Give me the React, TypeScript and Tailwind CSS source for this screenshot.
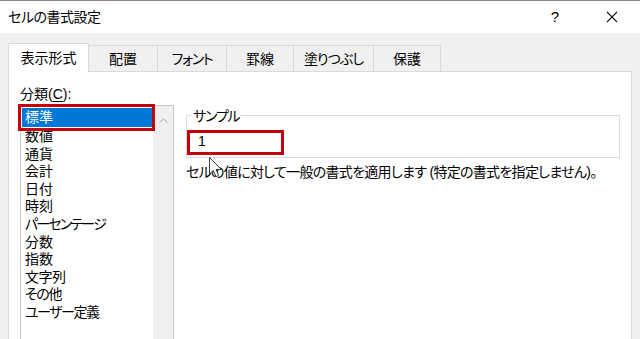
import React from "react";

const items: { t: string; c?: string }[] = [
  { t: "数値" },
  { t: "通貨" },
  { t: "会計" },
  { t: "日付" },
  { t: "時刻" },
  { t: "パーセンテージ", c: "tracking-[-1.8px]" },
  { t: "分数" },
  { t: "指数" },
  { t: "文字列", c: "tracking-[-0.5px]" },
  { t: "その他", c: "tracking-[-1.3px]" },
  { t: "ユーザー定義", c: "tracking-[-1.5px]" },
];

const tabs = [
  { label: "配置", w: "w-[69px]", c: "" },
  { label: "フォント", w: "w-[69px]", c: "tracking-[-1.2px]" },
  { label: "罫線", w: "w-[67px]", c: "" },
  { label: "塗りつぶし", w: "w-[80px]", c: "tracking-[-1px]" },
  { label: "保護", w: "w-[67px]", c: "" },
];

export default function App() {
  return (
    <div
      className="w-[640px] h-[339px] overflow-hidden bg-[#f0f0f0] relative flex flex-col text-black text-[14px] [font-feature-settings:'palt']"
      style={{ fontFamily: '"Liberation Sans", "Noto Sans CJK JP", sans-serif' }}
    >
      {/* title bar */}
      <div className="h-[33px] shrink-0 bg-white border-t border-[#8a8a8a] flex items-center pl-[8px]">
        <span className="leading-[18px] tracking-[-0.5px]">セルの書式設定</span>
        <span className="ml-auto mr-[47px] leading-[18px] text-[15px]">?</span>
        <svg width="12" height="12" viewBox="0 0 12 12" className="mr-[22px]">
          <path d="M1 1 L11 11 M11 1 L1 11" stroke="#111" strokeWidth="1.1" fill="none" />
        </svg>
      </div>

      {/* tabs */}
      <div className="flex items-end pl-[8px] mt-[10px] h-[28px] shrink-0">
        <div className="relative z-10 w-[81px] h-[29px] -mb-px bg-white border border-b-0 border-[#d9d9d9] flex items-center justify-center leading-[18px]">
          表示形式
        </div>
        {tabs.map((t) => (
          <div
            key={t.label}
            className={`${t.w} h-[26px] bg-[#f0f0f0] border-t border-r border-[#d9d9d9] flex items-center justify-center leading-[18px]`}
          >
            <span className={t.c}>{t.label}</span>
          </div>
        ))}
      </div>

      {/* panel */}
      <div className="ml-[8px] w-[624px] flex-1 bg-white border border-[#dadada] flex pl-[11px]">
        {/* left column */}
        <div className="w-[154px] shrink-0 pt-[13px] flex flex-col">
          <div className="h-[18px] leading-[18px]">
            分類(<span className="underline underline-offset-2">C</span>):
          </div>
          <div className="mt-[2px] h-[260px] border border-[#c8c8c8] flex">
            <div className="flex-1 pt-[2px] pl-px">
              <div className="h-[20px]">
                <div className="h-[19px] bg-[#0078d7] text-white pl-[3px] leading-[19px]">標準</div>
              </div>
              {items.map((it) => (
                <div key={it.t} className={`h-[17.6px] leading-[17.6px] pl-[3px] whitespace-nowrap ${it.c ?? ""}`}>
                  {it.t}
                </div>
              ))}
            </div>
            <div className="w-[20px] bg-[#f0f0f0] flex justify-center pt-[12px]">
              <svg width="9" height="5" viewBox="0 0 9 5">
                <path d="M0.5 4.5 L4.5 0.8 L8.5 4.5" stroke="#a6a6a6" strokeWidth="1" fill="none" />
              </svg>
            </div>
          </div>
        </div>

        {/* right column */}
        <div className="ml-[12px] pt-[43px] flex flex-col">
          <div className="relative w-[434px] h-[43px] border border-[#dcdcdc] pl-[11px] pt-[16px]">
            <span className="absolute -top-[9px] left-[5px] bg-white px-px leading-[18px] tracking-[-1.2px]">サンプル</span>
            <div className="leading-[18px]">1</div>
          </div>
          <div className="mt-[5px] leading-[18px] whitespace-nowrap tracking-[-0.7px]">
            セルの値に対して一般の書式を適用します (特定の書式を指定しません)。
          </div>
        </div>
      </div>

      {/* red annotation boxes */}
      <div className="absolute left-[18px] top-[104px] w-[137px] h-[27px] border-[3px] border-[#c8000e]" />
      <div className="absolute left-[187px] top-[130px] w-[97px] h-[25px] border-[3px] border-[#c8000e]" />

      {/* mouse cursor */}
      <svg className="absolute left-[209px] top-[157px]" width="14" height="22" viewBox="0 0 14 22">
        <path
          d="M0.5 0.5 L0.5 17 L4.3 13.4 L7 19.6 L9.6 18.5 L7 12.5 L12.3 12.5 Z"
          fill="#ffffff"
          stroke="#3a3a3a"
          strokeWidth="1"
          strokeLinejoin="round"
        />
      </svg>
    </div>
  );
}
